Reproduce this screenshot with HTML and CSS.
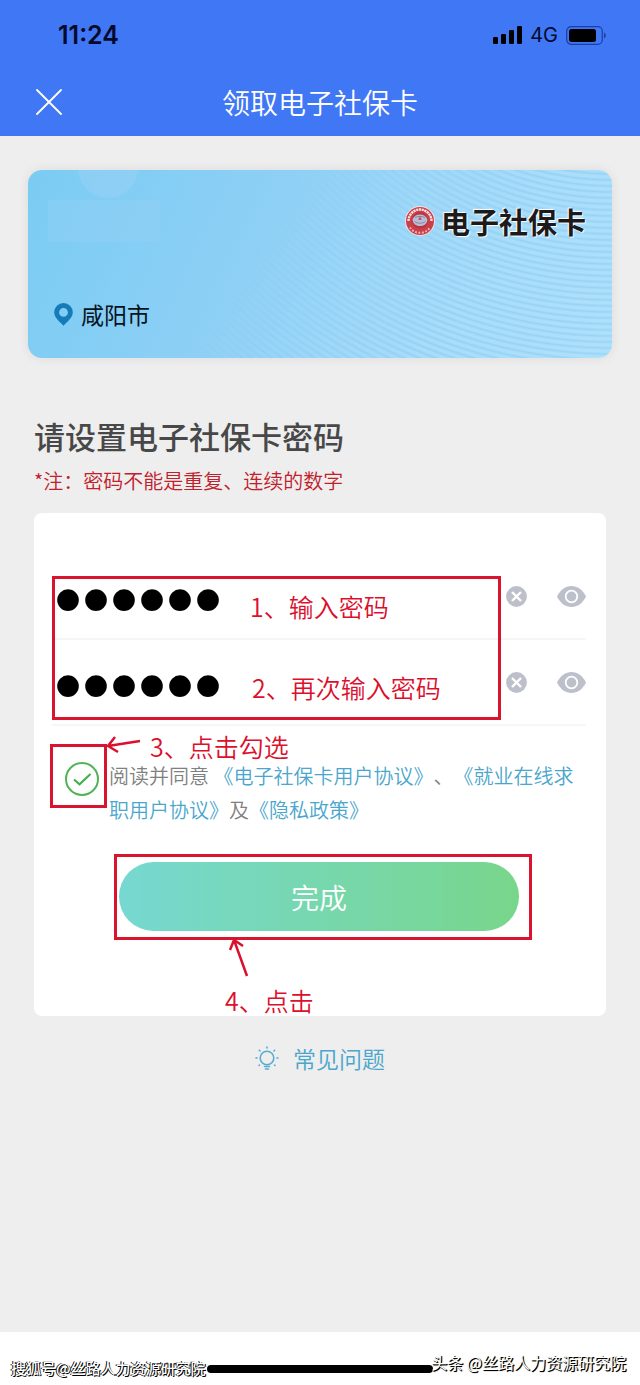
FILE: index.html
```html
<!DOCTYPE html>
<html lang="zh-CN">
  <head>
    <meta charset="UTF-8" />
    <meta name="viewport" content="width=device-width, initial-scale=1.0" />
    <title>领取电子社保卡</title>
    <link rel="stylesheet" href="styles.css">
  </head>
  <body>
    <header class="header">
      <div class="status-bar">
        <span class="time">11:24</span>
        <div class="status-icons">
          <svg class="signal" viewBox="0 0 29 18" width="29" height="18">
            <rect x="0" y="11" width="5" height="7" rx="1.3" />
            <rect x="8" y="8" width="5" height="10" rx="1.3" />
            <rect x="16" y="4" width="5" height="14" rx="1.3" />
            <rect x="24" y="0" width="5" height="18" rx="1.3" />
          </svg>
          <span class="network">4G</span>
          <svg class="battery" viewBox="0 0 40 19" width="40" height="19">
            <rect x="0.7" y="0.7" width="35.6" height="17.6" rx="4.5" fill="none" stroke="#1c3fa0" stroke-width="1.2" />
            <rect x="3" y="3" width="27" height="13" rx="2.5" />
            <path d="M38 6.5a3.4 3.4 0 0 1 0 6z" fill="#1c3fa0" />
          </svg>
        </div>
      </div>
      <nav class="nav">
        <button class="close" type="button" aria-label="关闭">
          <svg viewBox="0 0 26 26" width="26" height="26">
            <path d="M1 1L25 25M25 1L1 25" fill="none" stroke="#fff" stroke-width="1.8" stroke-linecap="round" />
          </svg>
        </button>
        <h1 class="nav-title">领取电子社保卡</h1>
      </nav>
    </header>

    <main class="main">
      <section class="id-card">
        <div class="brand">
          <svg class="emblem" viewBox="0 0 30 30" width="30" height="30">
            <circle cx="15" cy="15" r="15" fill="#f3dfe4" />
            <circle cx="15" cy="15" r="14" fill="#c9404a" />
            <path d="M3.5 15a11.5 11.5 0 0 1 23 0" fill="none" stroke="#f8dfe1" stroke-width="2.4" stroke-dasharray="2.2 0.6" />
            <circle cx="15" cy="14.5" r="8.2" fill="#b9343f" />
            <path d="M7.6 13.5c1-3.4 4-5 7.4-5s6.4 1.6 7.4 5c0 4-3 6.500-7.400 6.500s-7.400-2.500-7.400-6.500z" fill="#b9bdd3" />
            <path d="M10 11.500c3-1.500 7-1.500 10 0M9.500 15.500c3 2.300 8 2.300 11 0" fill="none" stroke="#8287a8" stroke-width="1" />
            <path d="M15 10.500l1.800 3.300h-3.600z" fill="#c9404a" />
            <path d="M5 21.500a12 12 0 0 0 20 0" fill="none" stroke="#f0b6ba" stroke-width="2" stroke-dasharray="1.8 1.6" />
          </svg>
          <span class="brand-name">电子社保卡</span>
        </div>
        <div class="city">
          <svg class="pin" viewBox="0 0 19 23" width="19" height="23">
            <path fill-rule="evenodd" d="M9.5 0a9.3 9.3 0 0 1 9.3 9.3c0 5.2-5 9.2-9.3 13.4C5.200 18.500 0.200 14.500 0.200 9.300A9.300 9.300 0 0 1 9.500 0zm0 5a4.400 4.400 0 1 0 0 8.800a4.400 4.400 0 0 0 0-8.800z" fill="#157cba" />
          </svg>
          <span>咸阳市</span>
        </div>
      </section>

      <h2 class="title">请设置电子社保卡密码</h2>
      <p class="note">*注：密码不能是重复、连续的数字</p>

      <form class="panel">
        <div class="fields">
          <div class="field">
            <input class="password" type="password" value="135246" aria-label="输入密码" />
            <button class="icon-btn" type="button" aria-label="清除">
              <svg viewBox="0 0 21 21" width="21" height="21">
                <circle cx="10.5" cy="10.5" r="10.4" fill="#bcc0cb" />
                <path d="M6 6l9 9M15 6l-9 9" stroke="#fff" stroke-width="2.4" />
              </svg>
            </button>
            <button class="icon-btn" type="button" aria-label="显示密码">
              <svg viewBox="0 0 29 21" width="29" height="21">
                <path d="M0 10.5C3.5 3.5 8.5 0 14.5 0S25.5 3.5 29 10.5C25.5 17.5 20.5 21 14.5 21S3.5 17.5 0 10.5z" fill="#bcc0cb" />
                <circle cx="14.5" cy="10.5" r="5.8" fill="none" stroke="#fff" stroke-width="1.8" />
              </svg>
            </button>
          </div>
          <div class="field">
            <input class="password" type="password" value="135246" aria-label="再次输入密码" />
            <button class="icon-btn" type="button" aria-label="清除">
              <svg viewBox="0 0 21 21" width="21" height="21">
                <circle cx="10.5" cy="10.5" r="10.4" fill="#bcc0cb" />
                <path d="M6 6l9 9M15 6l-9 9" stroke="#fff" stroke-width="2.4" />
              </svg>
            </button>
            <button class="icon-btn" type="button" aria-label="显示密码">
              <svg viewBox="0 0 29 21" width="29" height="21">
                <path d="M0 10.5C3.5 3.5 8.5 0 14.5 0S25.5 3.5 29 10.5C25.5 17.5 20.5 21 14.5 21S3.5 17.5 0 10.5z" fill="#bcc0cb" />
                <circle cx="14.5" cy="10.5" r="5.8" fill="none" stroke="#fff" stroke-width="1.8" />
              </svg>
            </button>
          </div>
          <div class="mark mark-fields"></div>
          <span class="step step-1">1、输入密码</span>
          <span class="step step-2">2、再次输入密码</span>
        </div>

        <div class="agree">
          <div class="check">
            <input class="check-input" type="checkbox" id="agree" checked />
            <svg class="check-tick" viewBox="0 0 34 34" width="34" height="34">
              <path d="M9 17.5l5.5 4.8L25.5 12" fill="none" stroke="#3fae49" stroke-width="2" />
            </svg>
            <div class="mark mark-check"></div>
            <svg class="arrow arrow-check" viewBox="0 0 36 20" width="36" height="20">
              <path d="M34 6L2 11M9 2L2 11L12 17" />
            </svg>
          </div>
          <p class="agree-text"><label for="agree">阅读并同意</label> <a href="#">《电子社保卡用户协议》</a>、<a href="#">《就业在线求职用户协议》</a>及<a href="#">《隐私政策》</a></p>
          <span class="step step-3">3、点击勾选</span>
        </div>

        <div class="submit-row">
          <button class="submit" type="submit">完成</button>
          <div class="mark mark-submit"></div>
          <svg class="arrow arrow-submit" viewBox="0 0 24 42" width="24" height="42">
            <path d="M20 39L7 3M3 13L7 3L16 9" />
          </svg>
          <span class="step step-4">4、点击</span>
        </div>
      </form>

      <a class="faq" href="#">
        <svg viewBox="0 0 24 24" width="24" height="24" fill="none" stroke="#5aadd2" stroke-width="1.6" stroke-linecap="round">
          <circle cx="12" cy="12" r="6.8" />
          <path d="M9.5 20.5h5M10.5 23h3M12 1v1M4.3 4.3l.7.7M19.7 4.3l-.7.7M1 12h1M22 12h1M4 19.5l.5-.5M20 19.500l-.5-.5" />
        </svg>
        <span>常见问题</span>
      </a>
    </main>

    <footer class="footer">
      <div class="home-bar"></div>
      <span class="watermark watermark-left">搜狐号@丝路人力资源研究院</span>
      <span class="watermark watermark-right">头条 @丝路人力资源研究院</span>
    </footer>
  </body>
</html>
```

FILE: styles.css
```css
* {
  box-sizing: border-box;
}
body {
  display: flex;
  flex-direction: column;
  min-height: 100vh;
  margin: 0;
  background-color: #eeeeee;
  font-family: "Noto Sans CJK SC", sans-serif;
  text-spacing-trim: space-all;
}
h1,
h2,
p {
  margin: 0;
}
button {
  padding: 0;
  border: none;
  background: none;
  font-family: inherit;
}
svg {
  display: block;
}
a {
  color: #4aa6cc;
  text-decoration: none;
}

/* header */
.header {
  background-color: #4077f5;
}
.status-bar {
  display: flex;
  justify-content: space-between;
  align-items: center;
  height: 70px;
  padding: 0 34px 0 58px;
  font-family: Inter, sans-serif;
  color: #050a2c;
}
.time {
  font-size: 25px;
  font-weight: 600;
}
.status-icons {
  display: flex;
  align-items: center;
  gap: 8px;
}
.network {
  font-size: 20px;
}
.nav {
  display: grid;
  grid-template-columns: 26px 1fr 26px;
  align-items: center;
  height: 66px;
  padding: 0 36px 2px;
}
.nav-title {
  text-align: center;
  font-size: 28px;
  font-weight: 350;
  line-height: 40px;
  color: #ffffff;
}

/* card */
.main {
  flex: 1;
  padding: 34px 28px 0;
}
.id-card {
  position: relative;
  display: flex;
  flex-direction: column;
  justify-content: space-between;
  height: 188px;
  padding: 36px 26px 28px;
  border-radius: 14px;
  background:
    radial-gradient(circle at 80px -2px, rgba(160, 210, 245, 0.4) 29px, transparent 31px),
    linear-gradient(rgba(160, 210, 245, 0.25), rgba(160, 210, 245, 0.25)) 20px 30px / 112px 42px no-repeat,
    linear-gradient(115deg, #7accf3 0%, #8ccff5 35%, #98d5f8 60%, #a3dcfb 100%);
  box-shadow: 0 0 12px rgba(0, 0, 0, 0.08);
  overflow: hidden;
}
.id-card::before {
  content: "";
  position: absolute;
  inset: 0;
  background: repeating-radial-gradient(circle at 100% -150%, rgba(255, 255, 255, 0.14) 0 2px, rgba(90, 170, 230, 0.12) 4px, rgba(255, 255, 255, 0.14) 6px);
  -webkit-mask-image: linear-gradient(125deg, transparent 38%, #000 75%);
  mask-image: linear-gradient(125deg, transparent 38%, #000 75%);
}
.brand {
  position: relative;
  display: flex;
  justify-content: flex-end;
  align-items: center;
  gap: 6px;
}
.brand-name {
  font-size: 29px;
  font-weight: 700;
  line-height: 30px;
  color: #1d1a1c;
  text-shadow: 1px 1px 1px #ffffff, -1px -1px 1px #ffffff;
}
.city {
  position: relative;
  display: flex;
  align-items: center;
  gap: 8px;
  font-size: 23px;
  line-height: 32px;
  color: #06131f;
}

/* form */
.title {
  margin: 56px 6px 0;
  font-size: 31px;
  font-weight: 500;
  line-height: 44px;
  color: #484848;
}
.note {
  margin: 8px 6px 0;
  font-size: 20px;
  font-weight: 350;
  line-height: 30px;
  color: #c1202b;
}
.panel {
  margin: 17px 6px 0;
  padding: 41px 20px 85px 18px;
  border-radius: 8px;
  background-color: #ffffff;
}
.fields {
  position: relative;
}
.field {
  display: flex;
  align-items: center;
  gap: 30px;
  height: 86px;
  border-bottom: 2px solid #f6f6f6;
}
.password {
  flex: 1;
  min-width: 0;
  height: 84px;
  padding: 8px 0 0 2px;
  border: none;
  outline: none;
  background: none;
  font-family: "Liberation Sans", sans-serif;
  font-size: 80px;
  line-height: 74px;
  color: #000000;
}
.agree {
  position: relative;
  display: flex;
  align-items: flex-start;
  gap: 10px;
  margin-top: 33px;
}
.check {
  position: relative;
  width: 34px;
  height: 34px;
  margin: 3px 0 0 13px;
}
.check-input {
  appearance: none;
  display: block;
  width: 34px;
  height: 34px;
  margin: 0;
  border: 2px solid #4fb457;
  border-radius: 50%;
}
.check-tick {
  position: absolute;
  top: 0;
  left: 0;
  pointer-events: none;
}
.agree-text {
  flex: 1;
  font-size: 20px;
  font-weight: 350;
  line-height: 34px;
  color: #808080;
}
.submit-row {
  position: relative;
  width: 400px;
  max-width: 100%;
  margin: 35px auto 0;
}
.submit {
  display: block;
  width: 100%;
  height: 69px;
  border-radius: 35px;
  background: linear-gradient(90deg, #76d8d1, #78d68b);
  font-size: 28px;
  font-weight: 350;
  color: #ffffff;
}

/* red tutorial marks */
.mark {
  position: absolute;
  border: 3px solid #d9142f;
  pointer-events: none;
}
.mark-fields {
  top: 22px;
  right: 85px;
  bottom: 6px;
  left: 0;
}
.mark-check {
  top: -18px;
  right: -8px;
  bottom: -12px;
  left: -15px;
}
.mark-submit {
  top: -8px;
  right: -13px;
  bottom: -9px;
  left: -5px;
}
.step {
  position: absolute;
  font-size: 25px;
  font-weight: 350;
  line-height: 26px;
  white-space: nowrap;
  color: #dc0f2d;
}
.step-1 {
  top: 39px;
  left: 198px;
}
.step-2 {
  top: 120px;
  left: 200px;
}
.step-3 {
  top: -26px;
  left: 98px;
}
.step-4 {
  top: 125px;
  left: 106px;
}
.arrow {
  position: absolute;
  fill: none;
  stroke: #dc0f2d;
  stroke-width: 2.5;
}
.arrow-check {
  top: -27px;
  left: 41px;
}
.arrow-submit {
  top: 75px;
  left: 108px;
}

.faq {
  display: flex;
  justify-content: center;
  align-items: center;
  gap: 14px;
  margin-top: 25px;
  font-size: 23px;
  font-weight: 350;
  line-height: 34px;
}

/* bottom */
.footer {
  position: relative;
  height: 53px;
  background-color: #ffffff;
}
.home-bar {
  width: 226px;
  height: 8px;
  margin: 33px auto 0;
  border-radius: 4px;
  background-color: #000000;
}
.watermark {
  position: absolute;
  line-height: 24px;
  color: #ffffff;
}
.watermark-left {
  bottom: 5px;
  left: 11px;
  font-size: 15px;
  font-weight: 500;
  text-shadow: 1px 1px 0 #000000, -1px 0 0 #000000;
}
.watermark-right {
  right: 14px;
  bottom: 11px;
  font-size: 16px;
  text-shadow: 1px 1px 0 #000000, 1px 1px 1px #000000;
}
```
